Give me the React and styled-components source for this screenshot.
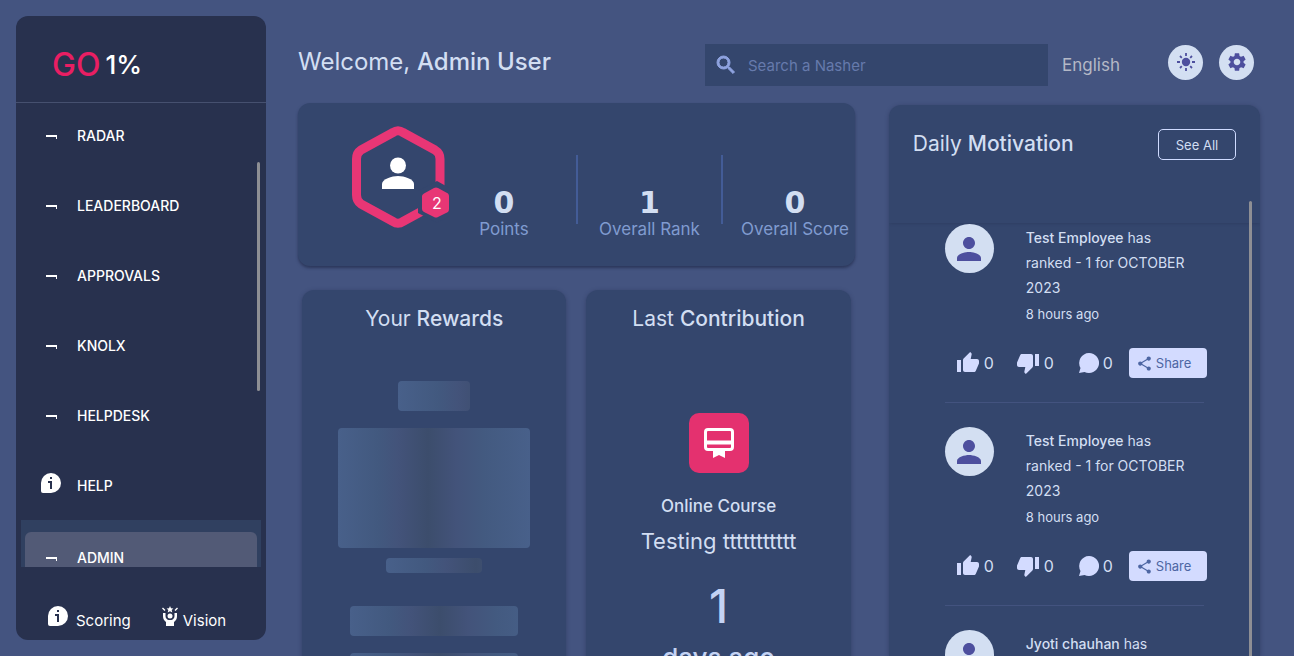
import React from "react";
import styled, { createGlobalStyle, css } from "styled-components";
import {
  MdPerson,
  MdSearch,
  MdSettings,
  MdThumbUp,
  MdThumbDown,
  MdShare,
} from "react-icons/md";

const GlobalStyle = createGlobalStyle`
  *, *::before, *::after { box-sizing: border-box; }
  body {
    margin: 0;
    background: #445480;
    color: #d2def2;
    font-family: Inter, "Open Sans", sans-serif;
    font-size: 14px;
    overflow: hidden;
  }
  h1, h2, p, ul { margin: 0; padding: 0; font-weight: 400; }
  ul { list-style: none; }
  button { font: inherit; cursor: pointer; border: 0; padding: 0; }
  a { color: inherit; text-decoration: none; }
  svg { display: block; flex-shrink: 0; }
  strong { font-weight: 500; }
`;

const Shell = styled.div`
  display: grid;
  grid-template-columns: 250px minmax(0, 1fr);
  grid-template-rows: minmax(0, 1fr);
  gap: 32px;
  height: 100vh;
  padding: 16px 34px 0 16px;
`;

/* Sidebar */
const Sidebar = styled.aside`
  display: flex;
  flex-direction: column;
  margin-bottom: 16px;
  min-height: 0;
  border-radius: 12px;
  background: #28314e;
  color: #fff;
`;

const Logo = styled.a`
  display: flex;
  flex-shrink: 0;
  align-items: center;
  gap: 5px;
  height: 87px;
  padding: 10px 36px 0;
  border-bottom: 1px solid #46506f;
  font-size: 26px;
  font-weight: 500;
`;

const LogoAccent = styled.span`
  color: #e91e63;
  font-size: 32px;
`;

const NavArea = styled.nav`
  position: relative;
  flex: 1;
  min-height: 0;
  overflow: hidden;
  padding: 0 5px;
`;

const NavList = styled.ul`
  margin-top: -5px;
`;

const NavItem = styled.li`
  padding: 12px 4px 8px;
  ${(p) => p.$active && css`
    margin-top: 2px;
    background: #304060;
  `}
`;

const NavLink = styled.a`
  display: flex;
  align-items: center;
  gap: 16px;
  height: 50px;
  padding-left: 16px;
  border-radius: 6px;
  font-size: 14px;
  font-weight: 500;
  ${(p) => p.$active && css`background: #525a76;`}
`;

const IconSlot = styled.span`
  display: flex;
  justify-content: center;
  align-items: center;
  width: 20px;
  padding-bottom: ${(p) => (p.$raised ? 4 : 0)}px;
`;

const Thumb = styled.span`
  position: absolute;
  top: ${(p) => p.$top}px;
  right: ${(p) => p.$right}px;
  height: ${(p) => p.$height};
  width: 3px;
  border-radius: 2px;
  background: #8e8f94;
`;

const SideFooter = styled.footer`
  display: flex;
  flex-shrink: 0;
  gap: 30px;
  height: 73px;
  padding: 39px 32px 0;
  font-size: 15px;
`;

const FooterLink = styled.a`
  display: flex;
  align-items: flex-start;
  gap: ${(p) => p.$gap}px;
  line-height: 30px;
`;

/* Main */
const Main = styled.main`
  display: flex;
  flex-direction: column;
  gap: 17px;
  min-width: 0;
  padding-top: 28px;
`;

const TopBar = styled.header`
  display: flex;
  flex-shrink: 0;
  align-items: center;
  height: 42px;
`;

const Welcome = styled.h1`
  flex: 1;
  padding-bottom: 7px;
  font-size: 24px;
  line-height: 34px;
  white-space: nowrap;
`;

const SearchBox = styled.label`
  display: flex;
  align-items: center;
  gap: 10px;
  width: 343px;
  height: 42px;
  padding: 0 9px;
  background: #34466d;
  color: #8fa3e0;
  path:not([fill="none"]) {
    stroke: currentColor;
    stroke-width: 1px;
  }
`;

const SearchInput = styled.input`
  flex: 1;
  min-width: 0;
  padding: 0;
  border: 0;
  outline: 0;
  background: transparent;
  color: #d2def2;
  font: inherit;
  font-size: 15px;
  &::placeholder { color: #667aac; opacity: 1; }
`;

const Language = styled.button`
  width: 96px;
  margin-left: 14px;
  background: transparent;
  color: #b4b8c6;
  font-size: 17px;
  text-align: left;
`;

const RoundButton = styled.button`
  display: grid;
  place-items: center;
  width: 35px;
  height: 35px;
  margin: 0 6px 6px 10px;
  border-radius: 50%;
  background: #d3dff2;
  color: #4d4f9e;
`;

const TopButtons = styled.div`
  display: flex;
`;

const Content = styled.div`
  display: grid;
  grid-template-columns: minmax(0, 3fr) minmax(0, 2fr);
  grid-template-rows: minmax(0, 1fr);
  gap: 34px;
  flex: 1;
  min-height: 0;
`;

const Card = styled.section`
  border-radius: 12px;
  background: #34466d;
  box-shadow: 0 1px 4px rgba(28, 36, 66, 0.4);
`;

const LeftColumn = styled.div`
  display: flex;
  flex-direction: column;
  gap: 24px;
`;

const Profile = styled(Card)`
  display: flex;
  justify-content: space-between;
  flex-shrink: 0;
  height: 163px;
  padding: 22px 0 0 52px;
  box-shadow: 0 2px 3px rgba(28, 36, 66, 0.6);
`;

const Stats = styled.div`
  display: flex;
  padding-top: 30px;
`;

const Stat = styled.div`
  display: flex;
  flex-direction: column;
  align-items: center;
  width: ${(p) => p.$width}px;
  padding: 31px ${(p) => p.$end || 0}px 0 ${(p) => p.$start || 0}px;
  white-space: nowrap;
`;

const StatValue = styled.strong`
  font-family: "DejaVu Sans", sans-serif;
  font-size: 30px;
  font-weight: 700;
  line-height: 34px;
`;

const StatLabel = styled.span`
  color: #809bd0;
  font-size: 17px;
  line-height: 18px;
`;

const Divider = styled.span`
  width: 2px;
  height: 69px;
  background: #435c97;
`;

const Pair = styled.div`
  display: grid;
  grid-template-columns: 1fr 1fr;
  gap: 20px;
  padding: 0 4px;
`;

const TallCard = styled(Card)`
  display: flex;
  flex-direction: column;
  align-items: center;
  padding: 14px 12px;
`;

const CardTitle = styled.h2`
  font-size: 21px;
  line-height: 30px;
  white-space: nowrap;
`;

const Skeletons = styled.div`
  display: flex;
  flex-direction: column;
  align-items: center;
  width: 100%;
  padding-top: 47px;
`;

const Bone = styled.span`
  width: ${(p) => p.$width};
  height: ${(p) => p.$height}px;
  margin-bottom: ${(p) => p.$gap}px;
  border-radius: 4px;
  background: linear-gradient(
    90deg,
    #48608a 0,
    #42597f 40px,
    #43537a 60px,
    #3c4d6c 90px,
    #43537a 118px,
    #435a80 146px,
    #48608a 192px
  );
`;

const CourseBadge = styled.span`
  display: grid;
  place-items: center;
  width: 60px;
  height: 60px;
  margin-top: 79px;
  border-radius: 10px;
  background: #e4316f;
  color: #fff;
`;

const CourseType = styled.p`
  margin-top: 20px;
  font-size: 17px;
  font-weight: 500;
  line-height: 26px;
`;

const CourseName = styled.p`
  margin-top: 7px;
  font-size: 22px;
  line-height: 30px;
`;

const DayCount = styled.p`
  margin-top: 24px;
  color: #c4d3f4;
  font-size: 46px;
  font-weight: 500;
  line-height: 52px;
`;

const DayUnit = styled.p`
  margin-top: 8px;
  color: #c4d3f4;
  font-size: 26px;
  font-weight: 500;
  line-height: 36px;
`;

const FeedCard = styled(Card)`
  position: relative;
  margin-top: 2px;
  min-height: 0;
  overflow: hidden;
  border-bottom-left-radius: 0;
  border-bottom-right-radius: 0;
`;

const FeedHeader = styled.header`
  display: flex;
  justify-content: space-between;
  height: 118px;
  padding: 24px 24px 0;
  box-shadow: 0 0 3px rgba(28, 36, 66, 0.35);
`;

const SeeAll = styled.button`
  width: 78px;
  height: 31px;
  border: 1px solid #cfdbff;
  border-radius: 5px;
  background: transparent;
  color: #d2def2;
  font-size: 13px;
`;

const Post = styled.article`
  margin: 0 56px 24px;
  padding-bottom: 24px;
  border-bottom: 1px solid #43537f;
  &:first-of-type { margin-top: 1px; }
`;

const PostBody = styled.div`
  display: flex;
  gap: 32px;
  height: 103px;
  margin-bottom: 21px;
`;

const Avatar = styled.span`
  display: grid;
  place-items: center;
  flex-shrink: 0;
  width: 49px;
  height: 49px;
  border-radius: 50%;
  background: #d3dff2;
  color: #4d4f9e;
`;

const PostText = styled.div`
  padding: 1px 10px 0 0;
  line-height: 25px;
`;

const PostTime = styled.p`
  font-size: 13px;
  line-height: 28px;
`;

const Actions = styled.div`
  display: flex;
  align-items: center;
  height: 30px;
  padding-left: 11px;
`;

const Reaction = styled.button`
  display: flex;
  flex-shrink: 0;
  align-items: center;
  gap: 4px;
  width: ${(p) => p.$width}px;
  background: transparent;
  color: #d2def2;
  font-size: 16px;
  line-height: 20px;
  svg { color: #d3dbff; }
`;

const Share = styled.button`
  display: flex;
  flex-shrink: 0;
  align-items: center;
  gap: 3px;
  width: 78px;
  height: 30px;
  padding-left: 7px;
  border-radius: 4px;
  background: #d3dbff;
  color: #4d66a3;
  font-size: 13px;
  line-height: 32px;
`;

const DashIcon = () => (
  <svg width="12" height="8" viewBox="0 0 12 8" fill="#fff" aria-hidden="true">
    <path d="M1 4h11v4h-1V6H1z" />
  </svg>
);

const InfoIcon = () => (
  <svg width="20" height="20" viewBox="0 0 20 20" aria-hidden="true">
    <path d="M10 0a10 10 0 0 1 0 20H2a2 2 0 0 1-2-2v-8A10 10 0 0 1 10 0z" fill="#fff" />
    <path d="M9 4h2v2H9zM7 8h4v8H9v-6H7z" fill="#28314e" />
  </svg>
);

const VisionIcon = () => (
  <svg width="18" height="22" viewBox="0 0 18 22" fill="#fff" aria-hidden="true">
    <path d="M9 0l1 2.200 2.400.2-1.700 1.700.6 2.400L9 5.300 6.700 6.500l.6-2.400-1.700-1.700L8 2.200z" />
    <circle cx="9" cy="10" r="2.500" />
    <path d="M2 7h2.500v3c0 2 1.300 3.500 3 4h3c1.700-.5 3-2 3-4V7H16v3c0 3-1 4.500-3 6v4H5v-4c-2-1.500-3-3-3-6z" />
    <path d="M1.500 2l2.500 2.500M16.500 2L14 4.500" stroke="#fff" strokeWidth="1.400" />
  </svg>
);

const SunIcon = () => (
  <svg width="18" height="18" viewBox="0 0 18 18" fill="currentColor" aria-hidden="true">
    <circle cx="9" cy="9" r="4.200" />
    <path
      d="M9 0v3M9 15v3M0 9h3M15 9h3M3 3l1.800 1.800M13.200 13.200L15 15M15 3l-1.800 1.800M4.800 13.200L3 15"
      stroke="currentColor"
      strokeWidth="1.800"
    />
  </svg>
);

const CommentIcon = () => (
  <svg width="20" height="20" viewBox="0 0 20 20" fill="currentColor" aria-hidden="true">
    <path d="M10 0a10 10 0 1 1-4.500 18.900L0 20l1.500-5A10 10 0 0 1 10 0z" />
  </svg>
);

const CertificateIcon = () => (
  <svg width="30" height="30" viewBox="0 0 30 30" fill="currentColor" aria-hidden="true">
    <rect x="1.500" y="1.500" width="27" height="20" rx="2.500" fill="none" stroke="currentColor" strokeWidth="3" />
    <path d="M2 12.500h26v4H2zM9 22h12v8l-6-3-6 3z" />
  </svg>
);

const BadgeText = styled.text`
  fill: #fff;
  font-size: 16px;
  text-anchor: middle;
`;

const HexAvatar = () => (
  <svg width="100" height="106" viewBox="0 0 100 106" role="img" aria-label="Level 2">
    <path
      d="M43 7.500Q48 4 53 7.500L85 25Q90 28 90 34V70Q90 76 85 79L53 96.500Q48 100 43 96.500L11 79Q6.500 76 6.500 70V34Q6.500 28 11 25Z"
      fill="none"
      stroke="#e83675"
      strokeWidth="9"
      strokeLinejoin="round"
    />
    <path d="M87 56L105 66V88L87 98L68 88V66Z" fill="#34466d" />
    <path
      d="M84 63Q86 62 88 63L98 68.500Q99 69.500 99 71V84Q99 86 98 87L88 92Q86 93 84 92L74 87Q72 86 72 84V71Q72 69.500 74 68.500Z"
      fill="#e83675"
    />
    <BadgeText x="87" y="84">2</BadgeText>
    <circle cx="48" cy="40.500" r="8" fill="#fff" />
    <path d="M32 64V59C32 54 42 51 48 51S64 54 64 59V64Z" fill="#fff" />
  </svg>
);

const NAV = ["RADAR", "LEADERBOARD", "APPROVALS", "KNOLX", "HELPDESK", "HELP", "ADMIN"];

const POSTS = [
  { name: "Test Employee", text: "has ranked - 1 for OCTOBER 2023" },
  { name: "Test Employee", text: "has ranked - 1 for OCTOBER 2023" },
  { name: "Jyoti chauhan", text: "has ranked - 1 for OCTOBER 2023" },
];

export default function App() {
  return (
    <>
      <GlobalStyle />
      <Shell>
        <Sidebar>
          <Logo href="#home">
            <LogoAccent>GO</LogoAccent>
            <span>1%</span>
          </Logo>
          <NavArea>
            <NavList>
              {NAV.map((label) => (
                <NavItem key={label} $active={label === "ADMIN"}>
                  <NavLink href={`#${label.toLowerCase()}`} $active={label === "ADMIN"}>
                    <IconSlot $raised={label === "HELP"}>
                      {label === "HELP" ? <InfoIcon /> : <DashIcon />}
                    </IconSlot>
                    {label}
                  </NavLink>
                </NavItem>
              ))}
            </NavList>
            <Thumb $top={59} $right={6} $height="229px" />
          </NavArea>
          <SideFooter>
            <FooterLink href="#scoring" $gap={8}>
              <InfoIcon />
              Scoring
            </FooterLink>
            <FooterLink href="#vision" $gap={4}>
              <VisionIcon />
              Vision
            </FooterLink>
          </SideFooter>
        </Sidebar>

        <Main>
          <TopBar>
            <Welcome>
              Welcome, <strong>Admin User</strong>
            </Welcome>
            <SearchBox>
              <MdSearch size={24} />
              <SearchInput type="search" placeholder="Search a Nasher" aria-label="Search a Nasher" />
            </SearchBox>
            <Language type="button">English</Language>
            <TopButtons>
              <RoundButton type="button" aria-label="Toggle theme">
                <SunIcon />
              </RoundButton>
              <RoundButton type="button" aria-label="Settings">
                <MdSettings size={22} />
              </RoundButton>
            </TopButtons>
          </TopBar>

          <Content>
            <LeftColumn>
              <Profile>
                <HexAvatar />
                <Stats>
                  <Stat $width={126} $end={18}>
                    <StatValue>0</StatValue>
                    <StatLabel>Points</StatLabel>
                  </Stat>
                  <Divider />
                  <Stat $width={143}>
                    <StatValue>1</StatValue>
                    <StatLabel>Overall Rank</StatLabel>
                  </Stat>
                  <Divider />
                  <Stat $width={134} $start={10}>
                    <StatValue>0</StatValue>
                    <StatLabel>Overall Score</StatLabel>
                  </Stat>
                </Stats>
              </Profile>
              <Pair>
                <TallCard>
                  <CardTitle>
                    Your <strong>Rewards</strong>
                  </CardTitle>
                  <Skeletons>
                    <Bone $width="30%" $height={30} $gap={17} />
                    <Bone $width="80%" $height={120} $gap={10} />
                    <Bone $width="40%" $height={15} $gap={33} />
                    <Bone $width="70%" $height={30} $gap={17} />
                    <Bone $width="70%" $height={30} $gap={17} />
                  </Skeletons>
                </TallCard>
                <TallCard>
                  <CardTitle>
                    Last <strong>Contribution</strong>
                  </CardTitle>
                  <CourseBadge>
                    <CertificateIcon />
                  </CourseBadge>
                  <CourseType>Online Course</CourseType>
                  <CourseName>Testing ttttttttttt</CourseName>
                  <DayCount>1</DayCount>
                  <DayUnit>days ago</DayUnit>
                </TallCard>
              </Pair>
            </LeftColumn>

            <FeedCard>
              <FeedHeader>
                <CardTitle>
                  Daily <strong>Motivation</strong>
                </CardTitle>
                <SeeAll type="button">See All</SeeAll>
              </FeedHeader>
              {POSTS.map((post, i) => (
                <Post key={i}>
                  <PostBody>
                    <Avatar>
                      <MdPerson size={36} />
                    </Avatar>
                    <PostText>
                      <p>
                        <strong>{post.name}</strong> {post.text}
                      </p>
                      <PostTime>8 hours ago</PostTime>
                    </PostText>
                  </PostBody>
                  <Actions>
                    <Reaction type="button" aria-label="Like" $width={60}>
                      <MdThumbUp size={24} />0
                    </Reaction>
                    <Reaction type="button" aria-label="Dislike" $width={63}>
                      <MdThumbDown size={24} />0
                    </Reaction>
                    <Reaction type="button" aria-label="Comment" $width={50}>
                      <CommentIcon />0
                    </Reaction>
                    <Share type="button">
                      <MdShare size={17} />
                      Share
                    </Share>
                  </Actions>
                </Post>
              ))}
              <Thumb $top={96} $right={8} $height="100%" />
            </FeedCard>
          </Content>
        </Main>
      </Shell>
    </>
  );
}
